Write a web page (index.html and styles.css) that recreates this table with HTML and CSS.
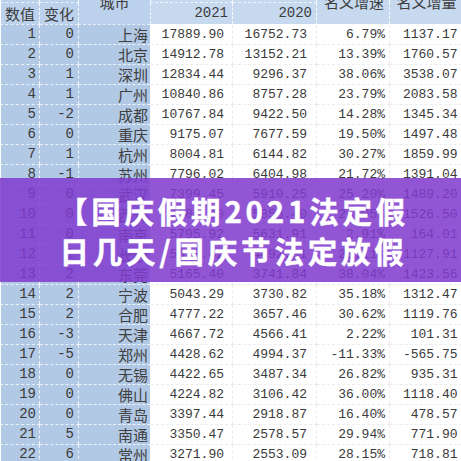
FILE: index.html
```html
<!DOCTYPE html>
<html lang="zh">
<head>
<meta charset="utf-8">
<link rel="stylesheet" href="styles.css">
</head>
<body>
<div class="page">
  <table class="sheet">
    <colgroup>
      <col class="c1"><col class="c2"><col class="c3"><col class="c4"><col class="c5"><col class="c6"><col class="c7">
    </colgroup>
    <thead>
      <tr class="hrow-a">
        <th class="blue"></th><th class="blue"></th>
        <th class="blue zh mid city-h" rowspan="2">城市</th>
        <th></th><th></th>
        <th class="zh mid" rowspan="2">名义增速</th>
        <th class="zh mid" rowspan="2">名义增量</th>
      </tr>
      <tr class="hrow-b">
        <th class="blue zh">数值</th><th class="blue zh">变化</th>
        <th class="num">2021</th><th class="num">2020</th>
      </tr>
    </thead>
    <tbody>
      <tr><td>1</td><td>0</td><td class="city">上海</td><td>17889.90</td><td>16752.73</td><td>6.79%</td><td>1137.17</td></tr>
      <tr><td>2</td><td>0</td><td class="city">北京</td><td>14912.78</td><td>13152.21</td><td>13.39%</td><td>1760.57</td></tr>
      <tr><td>3</td><td>1</td><td class="city">深圳</td><td>12834.44</td><td>9296.37</td><td>38.06%</td><td>3538.07</td></tr>
      <tr><td>4</td><td>1</td><td class="city">广州</td><td>10840.86</td><td>8757.28</td><td>23.79%</td><td>2083.58</td></tr>
      <tr><td>5</td><td>-2</td><td class="city">成都</td><td>10767.84</td><td>9422.50</td><td>14.28%</td><td>1345.34</td></tr>
      <tr><td>6</td><td>0</td><td class="city">重庆</td><td>9175.07</td><td>7677.59</td><td>19.50%</td><td>1497.48</td></tr>
      <tr><td>7</td><td>1</td><td class="city">杭州</td><td>8004.81</td><td>6144.82</td><td>30.27%</td><td>1859.99</td></tr>
      <tr><td>8</td><td>-1</td><td class="city">苏州</td><td>7796.02</td><td>6404.98</td><td>21.72%</td><td>1391.04</td></tr>
      <tr><td>9</td><td>0</td><td class="city">武汉</td><td>7399.45</td><td>5910.25</td><td>25.20%</td><td>1489.20</td></tr>
      <tr><td>10</td><td>0</td><td class="city">西安</td><td>7384.90</td><td>5858.40</td><td>26.05%</td><td>1526.50</td></tr>
      <tr><td>11</td><td>0</td><td class="city">南京</td><td>5795.92</td><td>5631.91</td><td>2.91%</td><td>164.01</td></tr>
      <tr><td>12</td><td>1</td><td class="city">长沙</td><td>5620.42</td><td>4492.51</td><td>25.11%</td><td>1127.91</td></tr>
      <tr><td>13</td><td>2</td><td class="city">东莞</td><td>5165.40</td><td>3741.84</td><td>38.04%</td><td>1423.56</td></tr>
      <tr><td>14</td><td>2</td><td class="city">宁波</td><td>5043.29</td><td>3730.82</td><td>35.18%</td><td>1312.47</td></tr>
      <tr><td>15</td><td>2</td><td class="city">合肥</td><td>4777.22</td><td>3657.46</td><td>30.62%</td><td>1119.76</td></tr>
      <tr><td>16</td><td>-3</td><td class="city">天津</td><td>4667.72</td><td>4566.41</td><td>2.22%</td><td>101.31</td></tr>
      <tr><td>17</td><td>-5</td><td class="city">郑州</td><td>4428.62</td><td>4994.37</td><td>-11.33%</td><td>-565.75</td></tr>
      <tr><td>18</td><td>0</td><td class="city">无锡</td><td>4422.65</td><td>3487.34</td><td>26.82%</td><td>935.31</td></tr>
      <tr><td>19</td><td>0</td><td class="city">佛山</td><td>4224.82</td><td>3106.42</td><td>36.00%</td><td>1118.40</td></tr>
      <tr><td>20</td><td>0</td><td class="city">青岛</td><td>3397.44</td><td>2918.87</td><td>16.40%</td><td>478.57</td></tr>
      <tr><td>21</td><td>5</td><td class="city">南通</td><td>3350.47</td><td>2578.57</td><td>29.94%</td><td>771.90</td></tr>
      <tr><td>22</td><td>6</td><td class="city">常州</td><td>3271.90</td><td>2553.09</td><td>28.15%</td><td>718.81</td></tr>
    </tbody>
  </table>
  <div class="banner">
    <h1 class="title">【国庆假期2021法定假<br>日几天/国庆节法定放假</h1>
  </div>
</div>
</body>
</html>
```

FILE: styles.css
```css
html, body {
  margin: 0;
  padding: 0;
  background: #ffffff;
}

.page {
  position: relative;
  width: 461px;
  height: 461px;
  overflow: hidden;
}

.sheet {
  margin-top: -16px;
  width: 461px;
  border-collapse: collapse;
  table-layout: fixed;
  font-family: "Liberation Mono", "Noto Sans CJK SC", monospace;
  font-size: 13px;
  color: #3a3a3a;
}

.c1 { width: 39px; }
.c2 { width: 39px; }
.c3 { width: 72px; }
.c4 { width: 82px; }
.c5 { width: 84px; }
.c6 { width: 73px; }
.c7 { width: 72px; }

thead th {
  background: #c6d9ef;
  font-weight: normal;
  text-align: right;
  padding: 0 4px 0 0;
  border-left: 1px dashed rgba(255, 255, 255, 0.85);
  border-bottom: 1px dashed rgba(255, 255, 255, 0.7);
  white-space: nowrap;
  color: #3c3c3c;
}

thead th.blue {
  background: #bcd2ec;
}

.hrow-a { height: 18px; }
.hrow-b { height: 20px; }

.hrow-b th {
  vertical-align: middle;
  font-size: 14px;
}

th.zh {
  font-family: "Noto Sans CJK SC", sans-serif;
  font-size: 15px;
  color: #3c3c3c;
}

th.mid {
  vertical-align: middle;
  text-align: right;
  padding-right: 5px;
  padding-bottom: 4px;
}

th.city-h {
  text-align: center;
  padding-right: 0;
  padding-left: 0;
}

tbody tr {
  height: 20px;
}

tbody td {
  text-align: right;
  padding: 0 7px 0 0;
  white-space: nowrap;
  border-left: 1px dashed #ececec;
  border-bottom: 1px dashed #ededed;
  line-height: 19px;
}

tbody td:nth-child(1),
tbody td:nth-child(2),
tbody td:nth-child(3) {
  background: #b2c9e6;
  border-left: 1px dashed rgba(255, 255, 255, 0.8);
  border-bottom: 1px dashed rgba(255, 255, 255, 0.75);
  padding-right: 3px;
  font-size: 14px;
}

tbody td:nth-child(2) { padding-right: 4px; }

tbody td:nth-child(4) { border-left: 1px solid #ffffff; padding-right: 8px; }
tbody td:nth-child(5) { padding-right: 9px; }
tbody td:nth-child(6) { padding-right: 4px; }
tbody td:nth-child(7) { padding-right: 4px; }

tbody td.city {
  font-family: "Noto Sans CJK SC", sans-serif;
  font-size: 15px;
  color: #404040;
  padding-right: 2px;
}

.banner {
  position: absolute;
  left: 0;
  top: 178px;
  width: 461px;
  height: 104px;
  background: rgba(128, 58, 206, 0.86);
  display: flex;
  align-items: center;
  justify-content: center;
}

.title {
  margin: 0;
  color: #ffffff;
  font-family: "Noto Sans CJK SC", sans-serif;
  font-weight: 700;
  font-size: 29.5px;
  line-height: 40px;
  letter-spacing: 3.8px;
  text-align: center;
  padding-left: 6px;
  -webkit-text-stroke: 0.4px #ffffff;
}
```
